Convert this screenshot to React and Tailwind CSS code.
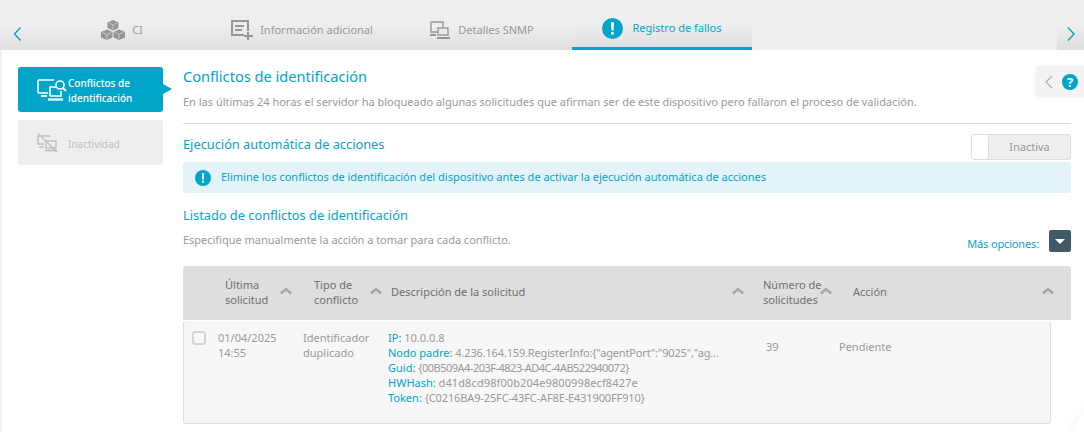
const font = { fontFamily: '"Noto Sans", sans-serif' }

function ChevronUp() {
    return (
        <svg width="14" height="8" viewBox="0 0 14 8" className="shrink-0">
            <path d="M2 6.5 L7 2 L12 6.5" fill="none" stroke="#a6a6a6" strokeWidth="2.4" />
        </svg>
    )
}

function CubesIcon() {
    return (
        <svg width="24" height="20" viewBox="0 0 24 20">
            <path d="M12 0 L17.5 2.5 L17.5 8 L12 10.5 L6.5 8 L6.5 2.5 Z" fill="#969696" />
            <path d="M6 9.5 L11.5 12 L11.5 17.5 L6 20 L0 17.5 L0 12 Z" fill="#969696" />
            <path d="M18 9.5 L24 12 L24 17.5 L18 20 L12.5 17.5 L12.5 12 Z" fill="#969696" />
            <path d="M8 3 L12 5 L16 3 M12 5 V9 M1.5 12.5 L6 14.5 L10 12.5 M6 14.5 V19 M14 12.5 L18 14.5 L22.5 12.5 M18 14.5 V19" fill="none" stroke="#cfcfcf" strokeWidth="0.8" />
        </svg>
    )
}

function AddInfoIcon() {
    return (
        <svg width="22" height="20" viewBox="0 0 22 20" fill="none" stroke="#969696" strokeWidth="2">
            <path d="M13 15 H1 V1 H17 V11" />
            <path d="M4 6 H13 M4 10 H11 M17 12 V20 M13 16 H22" />
        </svg>
    )
}

function SnmpIcon() {
    return (
        <svg width="21" height="18" viewBox="0 0 21 18" fill="none" stroke="#969696" strokeWidth="1.4">
            <path d="M7 11 H1 V1 H13 V6" />
            <rect x="8" y="7" width="10" height="7" />
            <path d="M0 14 H6 M7 17 H20" strokeWidth="2" />
        </svg>
    )
}

function AlertCircle({ size }) {
    return (
        <svg width={size} height={size} viewBox="0 0 20 20">
            <circle cx="10" cy="10" r="10" fill="#00a5c9" />
            <path d="M8.6 4 H11.4 L11 12 H9 Z" fill="#fff" />
            <rect x="8.8" y="13.4" width="2.4" height="2.4" fill="#fff" />
        </svg>
    )
}

function ConflictIcon() {
    return (
        <svg width="30" height="24" viewBox="0 0 30 24" fill="none" stroke="#fff" strokeWidth="1.6">
            <path d="M11 15 H2 Q1 15 1 14 V3 Q1 2 2 2 H17" />
            <path d="M4 18 H10" strokeWidth="2" />
            <path d="M13 18 V9 H19" />
            <path d="M24 13 V18 H13" />
            <path d="M11 21.5 H26" strokeWidth="2.2" />
            <circle cx="23" cy="7" r="4" />
            <path d="M26 10 L29 13" strokeWidth="2" />
        </svg>
    )
}

function InactiveIcon() {
    return (
        <svg width="21" height="20" viewBox="0 0 21 20" fill="none" stroke="#bdbdbd" strokeWidth="1.3">
            <path d="M7 11 H1 V3 H13" />
            <path d="M2 14 H7" />
            <rect x="9" y="8" width="10" height="7" />
            <path d="M8 17.5 H20" strokeWidth="1.6" />
            <path d="M1 0.5 L20 19" />
        </svg>
    )
}

function Tab({ icon, label, active }) {
    return (
        <div className={`w-[180px] h-[50px] pt-[10px] flex items-center justify-center bg-gradient-to-b from-[#eeeeee] from-50% to-[#e0e0e0] ${active ? 'gap-[9px] border-b-[3px] border-[#00a5c9] text-[#00a5c9]' : 'gap-[7px] text-[#999999]'}`}>
            {icon}
            <span>{label}</span>
        </div>
    )
}

function Field({ label, value, tracking }) {
    return (
        <p className="h-[15px] whitespace-nowrap">
            <span className="text-[#00a5c9]">{label}:</span> <span className={tracking}>{value}</span>
        </p>
    )
}

function App() {
    return (
        <div style={font} className="relative w-[1084px] h-[432px] overflow-hidden bg-white text-[11px]">
            {/* Tabs */}
            <div className="flex h-[50px] bg-[#eeeeee]">
                <div className="w-[32px] pl-[11px] flex items-center bg-gradient-to-b from-[#eeeeee] from-50% to-[#e0e0e0]">
                    <svg width="12" height="16" viewBox="0 0 12 16" className="mt-[17px]"><path d="M9.5 1.5 L3.5 8 L9.5 14.5" fill="none" stroke="#00a5c9" strokeWidth="1.4" /></svg>
                </div>
                <Tab icon={<CubesIcon />} label="CI" />
                <Tab icon={<AddInfoIcon />} label="Información adicional" />
                <Tab icon={<SnmpIcon />} label="Detalles SNMP" />
                <Tab icon={<AlertCircle size={21} />} label="Registro de fallos" active />
                <div className="flex-1" />
                <div className="w-[27px] pl-[8px] flex items-center bg-gradient-to-b from-[#eeeeee] from-50% to-[#dedede]">
                    <svg width="12" height="16" viewBox="0 0 12 16" className="mt-[17px]"><path d="M3 1.5 L9 8 L3 14.5" fill="none" stroke="#00a5c9" strokeWidth="1.4" /></svg>
                </div>
            </div>

            <div className="h-[382px] flex pt-[17px] pl-[16px] border-l-2 border-[#f2f2f2]">
                {/* Sidebar */}
                <div className="w-[145px] shrink-0 flex flex-col gap-[8px]">
                    <div className="relative h-[45px] rounded-[3px] bg-[#00a5c9] text-white flex items-center pl-[19px] gap-[1px] text-[10px] leading-[15px]">
                        <ConflictIcon />
                        <span className="font-medium mt-[3px]">Conflictos de<br />identificación</span>
                        <div className="absolute left-full top-[17px] border-y-[5px] border-l-[9px] border-y-transparent border-l-[#00a5c9]" />
                    </div>
                    <div className="h-[45px] rounded-[3px] bg-[#eeeeee] text-[#c0c0c0] text-[10px] flex items-center pl-[19px] gap-[10px]">
                        <InactiveIcon />
                        <span className="mt-[3px]">Inactividad</span>
                    </div>
                </div>

                {/* Main */}
                <div className="w-[888px] ml-[20px]">
                    <h1 className="-mt-[1px] text-[14.6px] leading-[20px] text-[#00a5c9]">Conflictos de identificación</h1>
                    <p className="mt-[8px] text-[#999999] leading-[16px] whitespace-nowrap">En las últimas 24 horas el servidor ha bloqueado algunas solicitudes que afirman ser de este dispositivo pero fallaron el proceso de validación.</p>
                    <div className="mt-[13px] border-t border-[#dddddd]" />

                    <div className="mt-[10px] h-[28px] flex justify-between">
                        <h2 className="text-[12.8px] leading-[20px] text-[#00a5c9]">Ejecución automática de acciones</h2>
                        <div className="w-[100px] h-[26px] flex rounded-[3px] border border-[#dddddd] bg-[#eeeeee] text-[#999999]">
                            <div className="w-[17px] rounded-[3px] bg-white border-r border-[#dddddd]" />
                            <span className="flex-1 text-center leading-[24px]">Inactiva</span>
                        </div>
                    </div>

                    <div className="h-[31px] rounded-[3px] bg-[#e4f3f8] flex items-center pl-[12px] gap-[10px] text-[#00a5c9]">
                        <AlertCircle size={16} />
                        <span>Elimine los conflictos de identificación del dispositivo antes de activar la ejecución automática de acciones</span>
                    </div>

                    <h2 className="mt-[12px] text-[12.8px] leading-[20px] text-[#00a5c9]">Listado de conflictos de identificación</h2>
                    <div className="flex justify-between h-[41px]">
                        <p className="mt-[7px] text-[#999999] leading-[16px] tracking-[-0.02px]">Especifique manualmente la acción a tomar para cada conflicto.</p>
                        <div className="flex items-start gap-[10px] pt-[5px]">
                            <span className="mt-[6px] text-[#00a5c9] leading-[16px] tracking-[-0.15px]">Más opciones:</span>
                            <div className="w-[22px] h-[22px] rounded-[2px] bg-[#415a68] flex items-center justify-center">
                                <div className="border-x-[5px] border-t-[5px] border-x-transparent border-t-white" />
                            </div>
                        </div>
                    </div>

                    {/* Table */}
                    <div className="h-[54px] pb-[4px] rounded-t-[3px] bg-[#dedede] flex items-center text-[#707070] leading-[15px] whitespace-nowrap">
                        <span className="mt-[2px] ml-[42px] w-[54px]">Última<br />solicitud</span>
                        <ChevronUp />
                        <span className="mt-[2px] ml-[21px] w-[55px]">Tipo de<br />conflicto</span>
                        <ChevronUp />
                        <span className="ml-[8px] w-[340px]">Descripción de la solicitud</span>
                        <ChevronUp />
                        <span className="mt-[2px] ml-[18px] w-[56px]">Número de<br />solicitudes</span>
                        <ChevronUp />
                        <span className="ml-[20px] w-[188px]">Acción</span>
                        <ChevronUp />
                    </div>
                    <div className="mt-[1px] w-[868px] h-[103px] rounded-[3px] border border-t-0 border-[#dddddd] bg-[#f7f7f7] flex text-[#999999] leading-[15px]">
                        <div className="ml-[8px] mt-[10px] w-[14px] h-[14px] rounded-[3px] border-2 border-[#d4d4d4]" />
                        <div className="ml-[12px] mt-[9px] w-[85px]">01/04/2025<br />14:55</div>
                        <div className="mt-[9px] w-[85px]">Identificador<br />duplicado</div>
                        <div className="mt-[9px] w-[378px]">
                            <Field label="IP" value="10.0.0.8" />
                            <Field label="Nodo padre" value={'4.236.164.159.RegisterInfo:{"agentPort":"9025","ag...'} tracking="tracking-[-0.16px]" />
                            <Field label="Guid" value="{00B509A4-203F-4823-AD4C-4AB522940072}" tracking="tracking-[-0.5px]" />
                            <Field label="HWHash" value="d41d8cd98f00b204e9800998ecf8427e" tracking="tracking-[0.1px]" />
                            <Field label="Token" value="{C0216BA9-25FC-43FC-AF8E-E431900FF910}" tracking="tracking-[-0.13px]" />
                        </div>
                        <div className="mt-[18px] w-[73px]">39</div>
                        <div className="mt-[18px]">Pendiente</div>
                    </div>
                </div>
            </div>

            {/* Help tab */}
            <div className="absolute right-0 top-[66px] w-[48px] h-[31px] rounded-l-[4px] bg-[#f3f3f3] shadow-[0_0_4px_rgba(0,0,0,0.06)] flex items-center pl-[8px] gap-[8px]">
                <svg width="10" height="16" viewBox="0 0 10 16"><path d="M8 2 L2 8 L8 14" fill="none" stroke="#aaaaaa" strokeWidth="1.2" /></svg>
                <div className="w-[16px] h-[16px] rounded-full bg-[#00a5c9] text-white text-[13px] font-bold leading-[16px] text-center">?</div>
            </div>
            {/* Corner widget */}
            <div className="absolute left-[1076px] top-[410px] w-[40px] h-[40px] rounded-full bg-white shadow-[0_0_20px_rgba(0,0,0,0.06)]" />
        </div>
    )
}

export default App
